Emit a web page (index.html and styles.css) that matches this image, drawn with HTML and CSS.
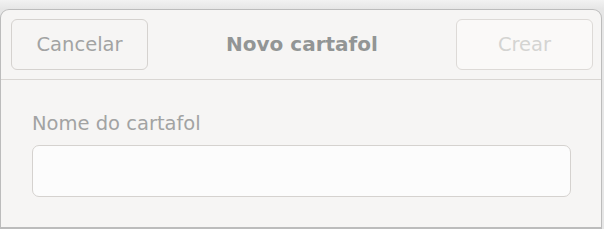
FILE: index.html
```html
<!DOCTYPE html>
<html>
<head>
<meta charset="utf-8">
<link rel="stylesheet" href="styles.css">
</head>
<body>
<div class="window">
  <div class="header">
    <button class="btn">Cancelar</button>
    <div class="title">Novo cartafol</div>
    <button class="btn btn-disabled">Crear</button>
  </div>
  <div class="content">
    <label class="label">Nome do cartafol</label>
    <div class="entry"></div>
  </div>
</div>
</body>
</html>
```
FILE: styles.css
```css
html, body {
  margin: 0;
  padding: 0;
  height: 100%;
}
body {
  background: linear-gradient(#f2f2f2, #e6e6e6 9px);
  font-family: "DejaVu Sans", sans-serif;
  overflow: hidden;
}
.window {
  box-sizing: border-box;
  margin: 9px 2px 0 0;
  height: 220px;
  background: #f6f5f4;
  border: 1px solid #bcbcbc;
  border-bottom-width: 2px;
  border-radius: 9px 9px 0 0;
  display: flex;
  flex-direction: column;
}
.header {
  height: 70px;
  flex: none;
  box-sizing: border-box;
  border-bottom: 1px solid #d9d6d3;
  display: flex;
  align-items: center;
  justify-content: space-between;
  padding: 0 8px 1px 10px;
}
.btn {
  box-sizing: border-box;
  width: 137px;
  height: 51px;
  border: 1px solid #d5d2cf;
  border-radius: 6px;
  background: #f6f5f4;
  font-family: "DejaVu Sans", sans-serif;
  font-size: 19.5px;
  color: #a2a3a3;
  padding: 0;
}
.btn-disabled {
  background: #faf9f8;
  color: #d4d4d2;
  border-color: #dddad7;
}
.title {
  font-weight: bold;
  font-size: 20px;
  color: #929595;
}
.content {
  padding: 32px 30px 0 31px;
  display: flex;
  flex-direction: column;
}
.label {
  font-size: 19.5px;
  color: #a2a3a3;
  line-height: 23px;
}
.entry {
  margin-top: 10px;
  box-sizing: border-box;
  height: 52px;
  background: #fcfcfc;
  border: 1px solid #d5d2cf;
  border-radius: 7px;
}
```
